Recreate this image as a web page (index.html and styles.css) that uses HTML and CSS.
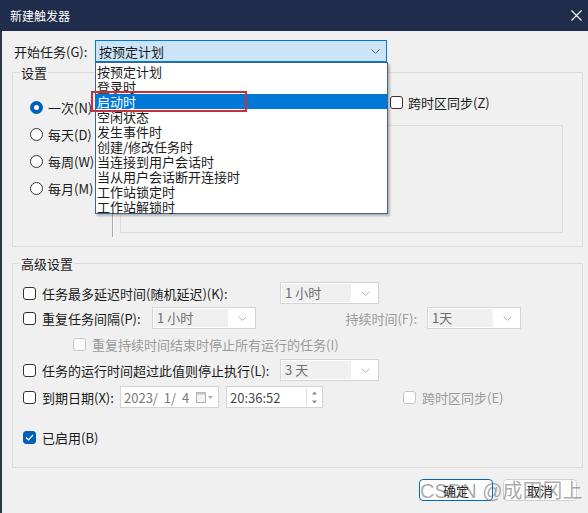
FILE: index.html
```html
<!DOCTYPE html>
<html lang="zh-CN">
<head>
  <meta charset="UTF-8">
  <meta name="viewport" content="width=device-width, initial-scale=1.0">
  <title>新建触发器</title>
  <link rel="stylesheet" href="styles.css">
</head>
<body>
  <div class="titlebar">
    <span class="title">新建触发器</span>
    <svg class="close" width="11" height="11" viewBox="0 0 11 11"><path d="M0.5 0.5L10.5 10.5M10.5 0.5L0.5 10.5" stroke="#fff" stroke-width="1.1"/></svg>
  </div>
  <div class="content">
    <div class="start-row">
      <span class="start-label">开始任务(G):</span>
      <div class="combo combo-open">
        <span>按预定计划</span>
        <svg width="9" height="5" viewBox="0 0 9 5"><path d="M0.5 0.5L4.5 4.5L8.5 0.5" fill="none" stroke="#606060"/></svg>
      </div>
      <ul class="droplist">
        <li>按预定计划</li>
        <li>登录时</li>
        <li class="selected">启动时</li>
        <li>空闲状态</li>
        <li>发生事件时</li>
        <li>创建/修改任务时</li>
        <li>当连接到用户会话时</li>
        <li>当从用户会话断开连接时</li>
        <li>工作站锁定时</li>
        <li>工作站解锁时</li>
      </ul>
      <div class="mark"></div>
    </div>

    <fieldset class="group settings">
      <legend>设置</legend>
      <div class="settings-inner">
        <div class="radios">
          <label class="radio-row"><span class="radio on"></span>一次(N)</label>
          <label class="radio-row"><span class="radio"></span>每天(D)</label>
          <label class="radio-row"><span class="radio"></span>每周(W)</label>
          <label class="radio-row"><span class="radio"></span>每月(M)</label>
        </div>
        <div class="sep"></div>
        <div class="detail">
          <div class="detail-top">
            <span class="check"></span>跨时区同步(Z)
          </div>
          <div class="detail-box"></div>
        </div>
      </div>
    </fieldset>

    <fieldset class="group advanced">
      <legend>高级设置</legend>
      <div class="rows">
        <div class="row">
          <label class="opt opt-delay"><span class="check"></span>任务最多延迟时间(随机延迟)(K):</label>
          <div class="combo combo-off w99">
            <span class="val">1 小时</span>
            <svg width="9" height="5" viewBox="0 0 9 5"><path d="M0.5 0.5L4.5 4.5L8.5 0.5" fill="none" stroke="#b4b4b4"/></svg>
          </div>
        </div>
        <div class="row r2">
          <label class="opt opt-repeat"><span class="check"></span>重复任务间隔(P):</label>
          <div class="combo combo-off w104">
            <span class="val">1 小时</span>
            <svg width="9" height="5" viewBox="0 0 9 5"><path d="M0.5 0.5L4.5 4.5L8.5 0.5" fill="none" stroke="#b4b4b4"/></svg>
          </div>
          <span class="dur-label">持续时间(F):</span>
          <div class="combo combo-off w94">
            <span class="val">1天</span>
            <svg width="9" height="5" viewBox="0 0 9 5"><path d="M0.5 0.5L4.5 4.5L8.5 0.5" fill="none" stroke="#b4b4b4"/></svg>
          </div>
        </div>
        <div class="row r3">
          <label class="opt disabled"><span class="check off"></span>重复持续时间结束时停止所有运行的任务(I)</label>
        </div>
        <div class="row r4">
          <label class="opt opt-delay"><span class="check"></span>任务的运行时间超过此值则停止执行(L):</label>
          <div class="combo combo-off w99">
            <span class="val">3 天</span>
            <svg width="9" height="5" viewBox="0 0 9 5"><path d="M0.5 0.5L4.5 4.5L8.5 0.5" fill="none" stroke="#b4b4b4"/></svg>
          </div>
        </div>
        <div class="row r5">
          <label class="opt opt-expire"><span class="check"></span>到期日期(X):</label>
          <div class="datebox">
            <span class="date">2023/  1/  4</span>
            <span class="cal-btn">
              <svg width="17" height="11" viewBox="0 0 17 11"><rect x="0.5" y="0.5" width="9" height="10" fill="#f4f4f4" stroke="#b0b0b0"/><rect x="0.5" y="0.5" width="9" height="2" fill="#c4c4c4"/><path d="M12 4h5l-2.5 3z" fill="#b0b0b0"/></svg>
            </span>
          </div>
          <div class="timebox">
            <span>20:36:52</span>
            <span class="spin">
              <svg width="9" height="4" viewBox="0 0 9 4"><path d="M2 3.5h5L4.5 0.5z" fill="#8a8a8a"/></svg>
              <svg width="9" height="4" viewBox="0 0 9 4"><path d="M2 0.5h5L4.5 3.5z" fill="#8a8a8a"/></svg>
            </span>
          </div>
          <label class="opt disabled opt-utc"><span class="check off"></span>跨时区同步(E)</label>
        </div>
        <div class="row r6">
          <label class="opt"><span class="check on">
            <svg width="9" height="7" viewBox="0 0 9 7"><path d="M1 3.5L3.4 5.8L8 1" fill="none" stroke="#fff" stroke-width="1.2"/></svg>
          </span>已启用(B)</label>
        </div>
      </div>
    </fieldset>

    <div class="buttons">
      <button class="btn btn-default">确定</button>
      <button class="btn">取消</button>
      <span class="watermark">CSDN @成田冈上</span>
    </div>
  </div>
</body>
</html>
```

FILE: styles.css
```css
* {
  box-sizing: border-box;
}
body {
  margin: 0;
  width: 588px;
  height: 513px;
  overflow: hidden;
  background: #f0f0f0;
  font-family: "Noto Sans CJK SC", "Microsoft YaHei", sans-serif;
  font-size: 13px;
  line-height: 17px;
  color: #1a1a1a;
}
.titlebar {
  height: 31px;
  background: #1f2c4b;
  color: #fff;
  display: flex;
  align-items: center;
  justify-content: space-between;
  padding: 0 6px 0 10px;
}
.title {
  font-size: 12px;
}
.content {
  height: 482px;
  border-left: 2px solid #2c3445;
  padding-top: 9px;
}

/* start task row + open dropdown */
.start-row {
  position: relative;
  display: flex;
  align-items: center;
  height: 22px;
  padding-left: 12px;
}
.start-label {
  width: 81px;
}
.combo {
  display: flex;
  align-items: center;
  justify-content: space-between;
  height: 22px;
  border: 1px solid #d2d2d2;
  background: #fff;
  padding: 0 6px 0 3px;
}
.combo-open {
  width: 292px;
  background: #cce4f7;
  border-color: #0078d7;
}
.droplist {
  position: absolute;
  left: 93px;
  top: 22px;
  width: 293px;
  height: 152px;
  margin: 0;
  padding: 1px 0 0;
  list-style: none;
  background: #fff;
  border: 1px solid #3d6587;
  box-shadow: 2px 2px 2px rgba(0, 0, 0, 0.25);
  z-index: 2;
}
.droplist li {
  height: 15px;
  line-height: 15px;
  padding-left: 1px;
}
.droplist li.selected {
  background: #0078d7;
  color: #fff;
}
.mark {
  position: absolute;
  left: 89px;
  top: 51px;
  width: 156px;
  height: 21px;
  border: 2px solid #c4303c;
  z-index: 3;
}

/* group boxes */
.group {
  margin: 0 5px 0 10px;
  border: 1px solid #dcdcdc;
  padding: 0 7px 9px;
  min-width: 0;
}
.group legend {
  padding: 0 1px;
  line-height: 17px;
}
.settings {
  margin-top: 2px;
}
.settings-inner {
  display: flex;
  height: 146px;
  margin-top: 10px;
}
.radios {
  width: 82px;
  margin-left: 10px;
  padding-top: 3px;
}
.radio-row {
  display: flex;
  align-items: center;
  gap: 5px;
  height: 27px;
}
.radio {
  width: 13px;
  height: 13px;
  border: 1px solid #333;
  border-radius: 50%;
  background: #fff;
}
.radio.on {
  border: 4px solid #005fb8;
  background: #fff;
}
.sep {
  width: 2px;
  border-left: 1px solid #a8a8a8;
  border-right: 1px solid #fff;
}
.detail {
  width: 443px;
  margin-left: 6px;
}
.detail-top {
  display: flex;
  align-items: center;
  gap: 5px;
  height: 22px;
  padding-left: 270px;
}
.detail-box {
  height: 108px;
  margin-top: 12px;
  border: 1px solid #dcdcdc;
}

/* advanced */
.advanced {
  margin-top: 8px;
  padding-bottom: 19px;
}
.rows {
  padding-top: 10px;
}
.row {
  display: flex;
  align-items: center;
  height: 22px;
}
.r2 { margin-top: 3px; }
.r3 { margin-top: 4px; padding-left: 53px; }
.r4 { margin-top: 4px; }
.r5 { margin-top: 5px; }
.r6 { margin-top: 18px; }
.opt {
  display: flex;
  align-items: center;
  gap: 6px;
  padding-left: 3px;
}
.r3 .opt {
  padding-left: 0;
}
.opt-delay { width: 260px; }
.opt-repeat { width: 132px; }
.opt-expire { width: 100px; }
.opt-utc { margin-left: 80px; padding-left: 0; }
.disabled {
  color: #9a9a9a;
}
.check {
  display: flex;
  align-items: center;
  justify-content: center;
  width: 13px;
  height: 13px;
  border: 1px solid #333;
  border-radius: 3px;
  background: #fff;
}
.check.off {
  border-color: #c4c4c4;
}
.check.on {
  background: #005fb8;
  border-color: #005fb8;
}
.combo-off {
  padding: 1px 8px 1px 1px;
  color: #6e6e6e;
  border-color: #d4d4d4;
}
.combo-off .val {
  flex: 1;
  height: 100%;
  margin-right: 10px;
  padding-left: 3px;
  background: #f0f0f0;
  line-height: 18px;
}
.w99 { width: 99px; }
.w104 { width: 104px; }
.w94 { width: 94px; }
.dur-label {
  width: 171px;
  padding-right: 10px;
  text-align: right;
  color: #9a9a9a;
}
.datebox,
.timebox {
  display: flex;
  align-items: center;
  justify-content: space-between;
  height: 22px;
  border: 1px solid #d4d4d4;
  background: #fff;
  padding-left: 3px;
}
.datebox {
  width: 99px;
  color: #7a7a7a;
  padding-right: 5px;
}
.date {
  white-space: pre;
}
.cal-btn {
  display: flex;
}
.timebox {
  width: 97px;
  margin-left: 7px;
  color: #4a4a4a;
  padding-right: 1px;
}
.spin {
  display: flex;
  flex-direction: column;
  justify-content: space-around;
  align-items: center;
  width: 15px;
  height: 18px;
  border-left: 1px solid #e0e0e0;
}

/* buttons */
.buttons {
  position: relative;
  display: flex;
  justify-content: flex-end;
  gap: 10px;
  margin-top: 11px;
  padding-right: 11px;
}
.btn {
  width: 74px;
  height: 22px;
  font-family: inherit;
  font-size: 13px;
  line-height: 17px;
  color: #1a1a1a;
  background: #fdfdfd;
  border: 1px solid #d0d0d0;
  border-radius: 4px;
  padding: 0;
}
.btn-default {
  border-color: #0067c0;
}
.watermark {
  position: absolute;
  left: 418px;
  top: 0;
  font-family: "Liberation Sans", "Noto Sans CJK SC", sans-serif;
  font-size: 20px;
  line-height: 24px;
  color: rgba(100, 100, 100, 0.55);
  white-space: nowrap;
}
```
